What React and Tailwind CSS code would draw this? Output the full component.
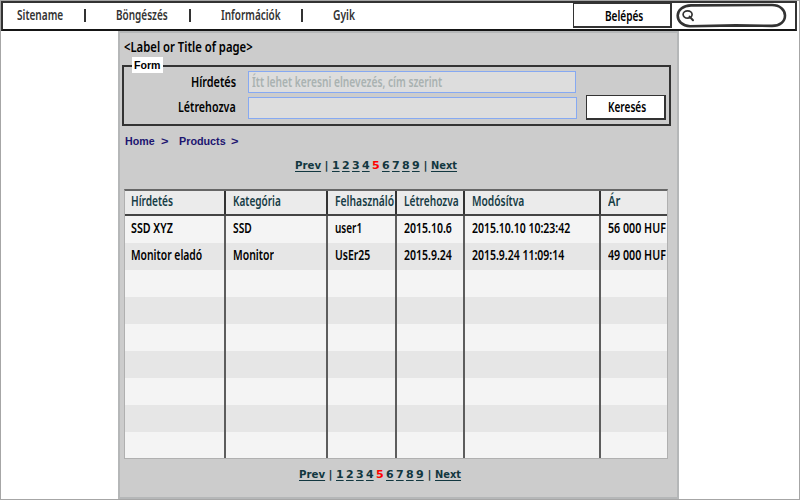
import React, { useLayoutEffect, useRef } from "react";

// Condenses its label horizontally so that it occupies the given width.
function Fit({ w, children, className = "" }) {
  const ref = useRef(null);
  useLayoutEffect(() => {
    const el = ref.current;
    el.style.transform = `scaleX(${w / el.offsetWidth})`;
  }, [w]);
  return (
    <span className="block shrink-0 whitespace-nowrap" style={{ width: w }}>
      <span ref={ref} className={`inline-block origin-left ${className}`}>{children}</span>
    </span>
  );
}

const link = "underline decoration-1 underline-offset-2";

const Pager = ({ className }) => (
  <div className={`flex h-4 font-['DejaVu_Sans'] text-[11px] font-bold leading-4 text-[#123740] ${className}`}>
    <Fit w={26} className={link}>Prev</Fit>
    <span className="w-[11px] text-center">|</span>
    <div className="flex gap-0.5">
      {[1, 2, 3, 4, 5, 6, 7, 8, 9].map((n) => (
        <Fit key={n} w={8} className={n === 5 ? "text-[#ff0000]" : link}>{n}</Fit>
      ))}
    </div>
    <span className="w-[11px] text-center">|</span>
    <Fit w={26} className={link}>Next</Fit>
  </div>
);

const heads = [["Hírdetés", 42], ["Kategória", 48], ["Felhasználó", 59], ["Létrehozva", 55], ["Modósítva", 52], ["Ár", 12]];
const rows = [
  [["SSD XYZ", 42], ["SSD", 19], ["user1", 27], ["2015.10.6", 48], ["2015.10.10 10:23:42", 98], ["56 000 HUF", 58]],
  [["Monitor eladó", 71], ["Monitor", 41], ["UsEr25", 35], ["2015.9.24", 48], ["2015.9.24 11:09:14", 92], ["49 000 HUF", 58]],
  ...Array.from({ length: 7 }, () => Array(6).fill(null)),
];
const cols = "grid grid-cols-[101px_102px_69px_68px_136px_66px]";

const Bar = ({ className }) => <i className={`mt-1 h-[13px] w-[1.5px] shrink-0 bg-[#333] ${className}`} />;

export default function App() {
  return (
    <div className="flex h-[500px] w-[800px] flex-col overflow-hidden border border-[#a6a6a6] bg-white font-['Noto_Sans','Open_Sans',sans-serif] text-[14px] font-semibold leading-5 text-black">
      <header className="flex h-[30px] w-[796px] shrink-0 border-2 border-[#333] border-b-[#151515] bg-white">
        <nav className="flex w-[570px] shrink-0 pl-3.5 pt-[2px] text-[#333]">
          <Fit w={46}>Sitename</Fit>
          <Bar className="ml-[21px]" />
          <span className="ml-[30.5px]"><Fit w={52}>Böngészés</Fit></span>
          <Bar className="ml-[21px]" />
          <span className="ml-[30.5px]"><Fit w={60}>Információk</Fit></span>
          <Bar className="ml-5" />
          <span className="ml-[30.5px]"><Fit w={22}>Gyik</Fit></span>
        </nav>
        <button className="flex h-[25px] w-[99px] shrink-0 items-center justify-center border border-[#333] border-r-2 border-b-2 bg-white pl-[3px] pt-px">
          <Fit w={38}>Belépés</Fit>
        </button>
        <svg className="ml-1 shrink-0" width="112" height="26" viewBox="0 0 112 26" fill="none" stroke="#333" strokeLinecap="round">
          <path d="M15 2.4L96 2C104 2 109 7 109 12.4C109 18.5 104 22.8 96 22.9L60 22.4L14 23.2C6 22.8 1.7 18 1.7 12.5C1.7 7 7 2.6 15 2.4Z" strokeWidth="2.6" />
          <ellipse cx="11.6" cy="11.5" rx="4.5" ry="3.6" strokeWidth="1.7" />
          <path d="M13.6 13.6L17 17.3" strokeWidth="2" />
        </svg>
      </header>

      <main className="ml-[117px] h-[468px] w-[561px] shrink-0 border-2 border-[#b5b7b8] bg-[#ccc] pl-0.5">
        <h1 className="h-8 pl-[1.5px] pt-1"><Fit w={129}>&lt;Label or Title of page&gt;</Fit></h1>

        <form className="flex h-[61px] w-[549px] border-2 border-[#333]">
          <div className="flex w-[112px] shrink-0 flex-col items-end">
            <div className="-mt-2.5 mr-[73px] flex h-4 w-[31px] items-center justify-center bg-white font-['Liberation_Sans'] text-[11px] font-bold">
              <Fit w={27}>Form</Fit>
            </div>
            <div className="-mt-px"><Fit w={45}>Hírdetés</Fit></div>
            <div className="mt-[5px]"><Fit w={58}>Létrehozva</Fit></div>
          </div>
          <div className="ml-3 flex w-[330px] shrink-0 flex-col gap-1 pt-1">
            <div className="h-[22px] w-[328px] border border-[#86a9f2] bg-[#ddd] pl-[2.5px] text-[#a9b2b1]">
              <Fit w={190}>Ítt lehet keresni elnevezés, cím szerint</Fit>
            </div>
            <div className="h-[22px] w-[329px] border border-[#86a9f2] bg-[#ddd]" />
          </div>
          <button type="button" className="ml-2 mt-[28px] flex h-[25px] w-[80px] items-center justify-center border border-[#333] border-r-2 border-b-2 bg-white pl-0.5">
            <Fit w={38}>Keresés</Fit>
          </button>
        </form>

        <nav className="flex h-8 pl-[3px] pt-[5px] font-['Liberation_Sans'] text-[11px] font-bold text-[#1c1570]">
          <Fit w={30}>Home</Fit>
          <span className="ml-1.5"><Fit w={7}>&gt;</Fit></span>
          <span className="ml-[11px]"><Fit w={47}>Products</Fit></span>
          <span className="ml-[5px]"><Fit w={7}>&gt;</Fit></span>
        </nav>

        <Pager className="ml-[173px]" />

        <section className="ml-0.5 mt-[15px] w-[544px] border border-t-2 border-[#b0b0b0] border-t-[#666]">
          <div className={`${cols} h-[25px] border-b-2 border-[#444] bg-[#ebebeb] text-[#163c45]`}>
            {heads.map(([t, w], i) => (
              <div key={t} className={`flex ${i ? "pl-[7px]" : "pl-1.5"} ${i < 5 ? "border-r-2 border-[#333]" : ""}`}>
                <Fit w={w}>{t}</Fit>
              </div>
            ))}
          </div>
          {rows.map((row, r) => (
            <div key={r} className={`${cols} ${r === 8 ? "h-[26px]" : "h-[27px]"} ${r % 2 ? "bg-[#e6e6e6]" : "bg-[#f4f4f4]"}`}>
              {row.map((cell, i) => (
                <div key={i} className={`flex pt-0.5 ${i ? "pl-[7px]" : "pl-1.5"} ${i < 5 ? "border-r-2 border-[#5d5d5d]" : ""}`}>
                  {cell && <Fit w={cell[1]}>{cell[0]}</Fit>}
                </div>
              ))}
            </div>
          ))}
        </section>

        <Pager className="ml-[177px] mt-2" />
      </main>
    </div>
  );
}
